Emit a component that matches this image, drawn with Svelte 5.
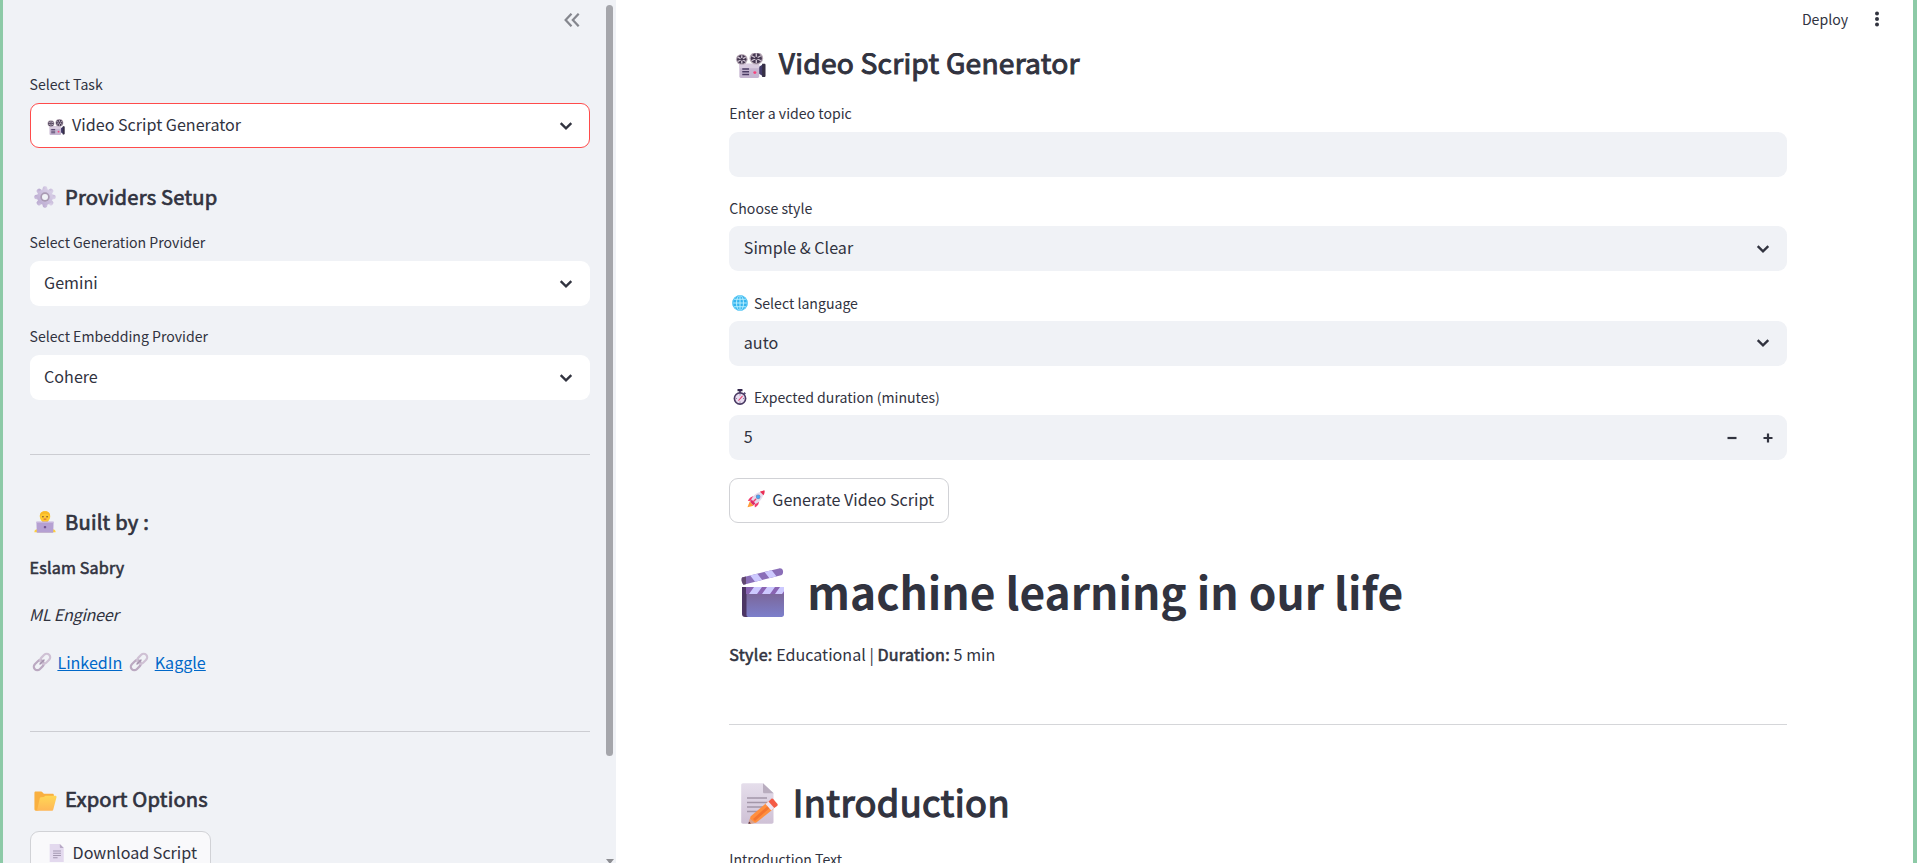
<script>
  let task = $state('Video Script Generator');
  let generation = $state('Gemini');
  let embedding = $state('Cohere');
  let style = $state('Simple & Clear');
  let language = $state('auto');
  let duration = $state(5);
</script>

{#snippet chevron()}
  <svg class="chevron" viewBox="0 0 14 10"><path d="M1.700 2.200 7 7.300l5.300-5.100" fill="none" stroke="#31333f" stroke-width="2.400" /></svg>
{/snippet}

{#snippet camera()}
  <svg class="emoji" viewBox="0 1 32 29" preserveAspectRatio="none">
    <path d="M23 18.5 30 14v15l-7-5z" fill="#433b6b" />
    <path d="M28 14.2h2.2c1 0 1.3.5 1.3 1.3v12c0 .8-.4 1.4-1.3 1.4H28z" fill="#362f45" />
    <rect x="4.5" y="14" width="20.5" height="16" rx="1.6" fill="#c5b5d0" />
    <rect x="4.5" y="14" width="20.5" height="5" rx="1.4" fill="#d9cce0" />
    <path d="M7.5 20h7M7.5 23h7M7.5 26h7" stroke="#4b3c64" stroke-width="1.6" />
    <circle cx="20.5" cy="24" r="1.6" fill="#f8427c" />
    <circle cx="7" cy="9.2" r="6" fill="#b6a7b4" />
    <circle cx="22" cy="8" r="7" fill="#b6a7b4" />
    <circle cx="7" cy="9.2" r="4.8" fill="#43364f" />
    <circle cx="22" cy="8" r="5.7" fill="#43364f" />
    <path d="M7 4.5v9.4M3 6.8l8 4.8M11 6.8l-8 4.8M22 2.5v11M17.2 5.2l9.6 5.6M26.8 5.2l-9.6 5.6" stroke="#cbbfce" stroke-width="1.5" />
    <circle cx="7" cy="9.2" r="1.5" fill="#43364f" />
    <circle cx="22" cy="8" r="1.7" fill="#43364f" />
  </svg>
{/snippet}

{#snippet gear()}
  <svg class="emoji" viewBox="0 0 32 32">
    <defs><linearGradient id="gearFill" x1="1" y1="0" x2="0" y2="1"><stop offset="0" stop-color="#ddd5ea" /><stop offset="1" stop-color="#b9a8cf" /></linearGradient></defs>
    <g fill="url(#gearFill)">
      {#each [0, 45, 90, 135] as turn}
        <rect x="12.6" y="0.5" width="6.8" height="31" rx="2.6" transform="rotate({turn} 16 16)" />
      {/each}
      <circle cx="16" cy="16" r="11.6" />
    </g>
    <circle cx="16" cy="16" r="6.8" fill="#a99ab3" />
    <circle cx="16" cy="16" r="4.4" fill="#f0f2f6" />
  </svg>
{/snippet}

{#snippet technologist()}
  <svg class="emoji" viewBox="0 0 32 32">
    <path d="M.5 31c0-3 1.500-4.500 4.500-4.500h22c3 0 4.500 1.500 4.500 4.500z" fill="#ffcf3d" />
    <path d="M12 12h8v5h-8z" fill="#f2a82c" />
    <rect x="8.500" y="0.300" width="15" height="15.400" rx="7" fill="#ffc931" />
    <path d="M8.500 8c0-5 3.200-7.700 7.500-7.700S23.500 3 23.500 8c-1.700-3-4-4-7.500-4S10.200 5 8.500 8z" fill="#f9b928" />
    <circle cx="13" cy="8.300" r="1.100" fill="#643c35" /><circle cx="19" cy="8.300" r="1.100" fill="#643c35" />
    <path d="M14 11.800h4" stroke="#d9473d" stroke-width="1.300" />
    <path d="M3.500 15.500h25L28 31.500H4z" fill="#b5a0d2" />
    <path d="M3.500 15.500h25v1.700h-25z" fill="#cbbce0" />
    <rect x="14.300" y="21.800" width="3.400" height="3.400" rx="1" fill="#715592" />
  </svg>
{/snippet}

{#snippet link()}
  <svg class="emoji" viewBox="0 0 32 32">
    <g transform="rotate(-45 16 16)" fill="none">
      <rect x="-2" y="9.800" width="20" height="12.400" rx="6.200" stroke="#bba9c1" stroke-width="3.900" />
      <rect x="14" y="9.800" width="20" height="12.400" rx="6.200" stroke="#cfc1d4" stroke-width="3.900" />
      <path d="M11 16h10" stroke="#a593ad" stroke-width="2.600" stroke-linecap="round" />
    </g>
  </svg>
{/snippet}

{#snippet folder()}
  <svg class="emoji" viewBox="0 0 32 28">
    <defs><linearGradient id="folderFill" x1="0" y1="0" x2="0" y2="1"><stop offset="0" stop-color="#ffd755" /><stop offset="1" stop-color="#ffb757" /></linearGradient></defs>
    <path d="M.5 2.500C.5 1.300 1.300.700 2.300.700h7.500c.8 0 1.300.300 1.900.900l2 2.100h12c1.200 0 2 .700 2 1.900V20L4 27.500H2.300C1.300 27.500.500 26.700.500 25.700z" fill="#f9b040" />
    <path d="M8 10.200c.3-1 .8-1.400 1.700-1.500l3.800-.4L16 6.500h13.700c1.300 0 2 .9 1.700 2.100l-4.500 17.200c-.3 1.100-1 1.700-2.100 1.700H3c1-.4 1.400-1 1.600-1.800z" fill="url(#folderFill)" />
  </svg>
{/snippet}

{#snippet page()}
  <svg class="emoji" viewBox="0 0 32 32">
    <path d="M3 0h18l7 7v25H3z" fill="#e3d9ee" />
    <path d="M21 0v5.500c0 1 .5 1.500 1.500 1.500H28z" fill="#b8a9c6" />
    <path d="M9 12.500h14M9 16.500h14M9 20.500h14M9 24.500h8" stroke="#a498b1" stroke-width="1.900" />
  </svg>
{/snippet}

{#snippet globe()}
  <svg class="emoji" viewBox="0 0 32 32">
    <circle cx="16" cy="16" r="15.500" fill="#35b4ee" />
    <g fill="none" stroke="#b9f0ff" stroke-width="1.900">
      <ellipse cx="16" cy="16" rx="7" ry="15" /><path d="M16 1v30M1 16h30M4 8.500h24M4 23.500h24" />
      <circle cx="16" cy="16" r="14.600" stroke="#69cff7" />
    </g>
  </svg>
{/snippet}

{#snippet stopwatch()}
  <svg class="emoji" viewBox="0 0 32 32">
    <rect x="11" y="0" width="10" height="4.500" rx="1.200" fill="#33264c" />
    <path d="M14 4h4v4h-4zM25 6l3 3-3 3-3-3z" fill="#5b4b75" />
    <circle cx="16" cy="19" r="12.800" fill="#493a63" />
    <circle cx="16" cy="19" r="9.600" fill="#e8dcf0" />
    <path d="M16 10.500v2.500M16 25v2.500M7.500 19H10M22 19h2.500" stroke="#766786" stroke-width="1.500" />
    <path d="m13.500 22.500 7-8" stroke="#e8335f" stroke-width="2.200" stroke-linecap="round" />
  </svg>
{/snippet}

{#snippet rocket()}
  <svg class="emoji" viewBox="0 0 32 32">
    <path d="M5 20 .8 30.800 12 28z" fill="#ff9c35" />
    <path d="M14 10.500C8 10 4 14 1.500 19.500l9-.5zM21.500 18c.5 6-2.500 10.500-7.500 13l-1-9z" fill="#f23b70" />
    <path d="M6 21.500C8 12 16 3.500 27 3l2.500 2.500C28.500 16 20 24.500 11 26.500z" fill="#e4dced" />
    <path d="M23 3c3-1.700 6.500-2.400 8.400-2.300C31.600 3 31 6.500 29.400 9.500z" fill="#e92f55" />
    <path d="m5.500 21 3-3.500 6.500 6.500-4 3z" fill="#dc2b68" />
    <circle cx="19.800" cy="12.200" r="4.100" fill="#8b83a8" /><circle cx="19.800" cy="12.200" r="3.200" fill="#47a8f2" />
    <path d="m11.500 20.500 4-4" stroke="#f23b70" stroke-width="2.400" stroke-linecap="round" />
  </svg>
{/snippet}

{#snippet clapper()}
  <svg class="emoji" viewBox="0 0 43 49">
    <defs>
      <linearGradient id="slate" x1="0" y1="0" x2="0" y2="1"><stop offset="0" stop-color="#7b608d" /><stop offset="1" stop-color="#7c7fcb" /></linearGradient>
      <clipPath id="armClip"><path d="M1 9.500 38 .4c2-.4 3.300.4 3.900 2.200.5 1.900 0 4-1.800 4.600L2.500 16.700C.500 14.500.200 11.500 1 9.500z" /></clipPath>
      <clipPath id="barClip"><path d="M5 19h38v7H5z" /></clipPath>
    </defs>
    <g clip-path="url(#armClip)">
      <path d="M0 0h43v18H0z" fill="#8a6eb8" />
      <path d="m8 6 7 9 7-2-7-9zM22 2l7 9 7-2-7-9z" fill="#cdc9ff" />
      <path d="M0 8h5v10H0z" fill="#614870" />
    </g>
    <path d="M1 19h6v30H4c-2 0-3-1-3-3z" fill="#4c3564" />
    <path d="M5.500 19H43v27.500c0 1.500-1 2.500-2.500 2.500h-33c-1.200 0-2-1-2-2z" fill="url(#slate)" />
    <g clip-path="url(#barClip)">
      <path d="M5 19h38v7H5z" fill="#8964b3" />
      <path d="m13 19-5 7h8l5-7zM26 19l-5 7h8l5-7zM39 19l-5 7h7l5-7z" fill="#cdc9ff" />
    </g>
  </svg>
{/snippet}

{#snippet memo()}
  <svg class="emoji" viewBox="0 0 37 41">
    <defs><linearGradient id="sheet" x1="0" y1="0" x2="0" y2="1"><stop offset="0" stop-color="#e5deeb" /><stop offset="1" stop-color="#cfc1d6" /></linearGradient></defs>
    <path d="M2 .3h20L32.500 10v29c0 1-.7 1.700-1.800 1.700H2C.8 40.700.2 40 .2 39V2C.2 1 .9.300 2 .300z" fill="url(#sheet)" />
    <path d="M22 .3v8.500c0 1 .5 1.500 1.500 1.500h9z" fill="#b9adbf" />
    <path d="M6 15h20M6 19.500h20M6 24h17M6 28.500h12" stroke="#a396a9" stroke-width="1.300" />
    <path d="M9.500 33.500 27 18.500l6 7L15 39.800 8 40.700z" fill="#ff8f3e" />
    <path d="m12 36 17-15 2 2-17 15z" fill="#f5752f" />
    <path d="m8.800 35.500-1.500 5.300 7-.9z" fill="#d9a18d" /><path d="m8 38.500-.7 2.300 2.600-.3z" fill="#4e3147" />
    <path d="m24.500 21 3-2.600 5.800 6.500-3 2.600z" fill="#eee3f2" />
    <path d="m27.500 18.400 2.700-2.400c.8-.6 1.500-.5 2.200.2l3.900 4.600c.6.800.5 1.500-.2 2.100l-2.800 2.200z" fill="#f45a45" />
  </svg>
{/snippet}

<div class="page">
  <aside class="sidebar">
    <div class="collapse">
      <svg viewBox="0 0 16 14"><path d="M7.500.700 1.600 7l5.900 6.300M14.700.700 8.800 7l5.900 6.300" fill="none" stroke="#85878e" stroke-width="2.200" /></svg>
    </div>

    <div class="label">Select Task</div>
    <div class="field light active"><span class="lead reel">{@render camera()}</span><span class="value">{task}</span>{@render chevron()}</div>

    <h3 class="setup"><span class="lead side">{@render gear()}</span>Providers Setup</h3>
    <div class="label">Select Generation Provider</div>
    <div class="field light"><span class="value">{generation}</span>{@render chevron()}</div>
    <div class="label next">Select Embedding Provider</div>
    <div class="field light"><span class="value">{embedding}</span>{@render chevron()}</div>

    <hr />

    <h3><span class="lead side">{@render technologist()}</span>Built by :</h3>
    <p class="name"><strong>Eslam Sabry</strong></p>
    <p class="role"><em>ML Engineer</em></p>
    <p class="links">
      <span class="lead chain">{@render link()}</span><a href="#linkedin">LinkedIn</a>
      <span class="lead chain second">{@render link()}</span><a href="#kaggle">Kaggle</a>
    </p>

    <hr class="late" />

    <h3><span class="lead side folder">{@render folder()}</span>Export Options</h3>
    <button class="download"><span class="lead small page-icon">{@render page()}</span>Download Script</button>

    <div class="thumb"></div>
    <div class="arrow"></div>
  </aside>

  <main>
    <header>
      <span class="deploy">Deploy</span>
      <svg class="dots" viewBox="0 0 6 16"><circle cx="3" cy="2.500" r="2" /><circle cx="3" cy="8" r="2" /><circle cx="3" cy="13.500" r="2" /></svg>
    </header>

    <div class="content">
      <h3 class="title"><span class="lead cam">{@render camera()}</span>Video Script Generator</h3>

      <div class="label">Enter a video topic</div>
      <div class="field"></div>

      <div class="label next">Choose style</div>
      <div class="field"><span class="value">{style}</span>{@render chevron()}</div>

      <div class="label next"><span class="lead tiny">{@render globe()}</span>Select language</div>
      <div class="field"><span class="value">{language}</span>{@render chevron()}</div>

      <div class="label next"><span class="lead tiny">{@render stopwatch()}</span>Expected duration (minutes)</div>
      <div class="field">
        <span class="value">{duration}</span>
        <div class="steps">
          <svg viewBox="0 0 10 10"><path d="M.5 5h9" stroke="#31333f" stroke-width="2.200" /></svg>
          <svg viewBox="0 0 10 10"><path d="M.5 5h9M5 .5v9" stroke="#31333f" stroke-width="2.200" /></svg>
        </div>
      </div>

      <button class="generate"><span class="lead small">{@render rocket()}</span>Generate Video Script</button>

      <h1><span class="lead big">{@render clapper()}</span>machine learning in our life</h1>
      <p class="meta"><strong>Style:</strong> Educational | <strong>Duration:</strong> 5 min</p>
      <hr />
      <h2><span class="lead mid">{@render memo()}</span>Introduction</h2>
      <div class="label">Introduction Text</div>
    </div>
  </main>
</div>

<style>
  :global(body) { overflow: hidden; background: #fff; }

  .page {
    display: flex;
    box-sizing: border-box;
    width: 1917px;
    height: 863px;
    overflow: hidden;
    border-left: 3px solid #8dcaa7;
    border-right: 4px solid #8dcaa7;
    background: #fff;
    color: #31333f;
    font: 400 16.1px/28px "Noto Sans CJK SC", "Noto Sans", sans-serif;
  }

  h1, h2, h3, p { margin: 0; display: flex; align-items: center; white-space: pre; }
  hr { width: 100%; height: 1px; margin: 0; border: 0; flex: none; background: #d5d6d9; }

  /* semi-bold drawn from the regular cut */
  h2, h3, strong { font-weight: 400; -webkit-text-stroke: 0.036em currentColor; letter-spacing: 0.011em; }
  .meta strong { letter-spacing: 0.018em; }

  .sidebar {
    position: relative;
    display: flex;
    flex-direction: column;
    flex: none;
    box-sizing: border-box;
    width: 613px;
    height: 863px;
    padding: 0 26px 0 26.600px;
    overflow: hidden;
    background: #f0f2f6;
  }
  .sidebar > * { flex: none; }

  .collapse { display: flex; justify-content: flex-end; height: 59px; padding: 13px 10px 0 0; }
  .collapse svg { width: 16px; height: 14px; }

  .label {
    display: flex;
    align-items: center;
    height: 24px;
    margin-bottom: 7px;
    font-size: 14.1px;
    line-height: 24px;
    white-space: pre;
  }
  .sidebar .label.next { margin-top: 18px; }
  .content .label.next { margin-top: 19.200px; margin-bottom: 6.300px; }

  .field {
    display: flex;
    align-items: center;
    box-sizing: border-box;
    height: 45px;
    padding: 0 17px 0 14.5px;
    border-radius: 9px;
    background: #f0f2f6;
  }
  .field.light { background: #fff; }
  .field.active { padding: 0 16px 0 16px; border: 1px solid #ff4b4b; }
  .value { flex: 1; height: 28px; margin-top: -3.200px; white-space: pre; }
  .chevron { width: 14px; height: 10px; }

  .emoji { display: block; width: 100%; height: 100%; overflow: visible; }
  .lead { flex: none; display: block; }
  .lead.small { width: 18px; height: 18px; margin-right: 7px; }
  .lead.page-icon { margin-top: 2px; }
  .lead.reel { width: 18px; height: 16px; margin: 2px 7.500px 0 0; }
  .lead.side { width: 22px; height: 22px; margin: 0 9.400px 0 4px; }
  .lead.side.folder { width: 23px; height: 20px; margin: 4px 8.400px 0 4px; }
  .lead.chain { width: 18px; height: 18px; margin: 0 6.800px 0 3px; }
  .lead.cam { width: 31px; height: 26px; margin: 7px 12.500px 0 6px; }
  .lead.tiny { width: 16px; height: 16px; margin: 0 6px 0 2.600px; }
  .lead.big { width: 43px; height: 49px; margin: 4px 23px 0 12px; }
  .lead.mid { width: 37px; height: 41px; margin: 4px 14.500px 0 12px; }

  .sidebar h3 { height: 28px; font-size: 20.150px; line-height: 28px; }
  .sidebar .setup { margin: 35px 0 19px; }
  .sidebar hr { margin: 54px 0 53px; background: #cccdd2; }
  .sidebar hr.late { margin-top: 55px; }
  .name { margin-top: 17px; }
  .role { margin-top: 19px; letter-spacing: -0.25px; }
  .role em { margin-left: -0.5px; }
  .links { margin-top: 20px; white-space: normal; }
  .lead.chain.second { margin-left: 7.500px; }
  a { color: #0068c9; text-decoration: underline; }

  button {
    display: flex;
    align-items: center;
    box-sizing: border-box;
    height: 45px;
    border: 1px solid #d1d2d6;
    border-radius: 9px;
    color: inherit;
    font: inherit;
    white-space: nowrap;
  }
  .download { align-self: flex-start; width: 181px; margin-top: 18px; padding: 0 0 3px 17px; background: #f9f9fb; }

  .thumb { position: absolute; top: 5px; left: 603px; width: 7px; height: 751px; border-radius: 4px; background: #a5a6ab; }
  .arrow { position: absolute; top: 859px; left: 602.500px; border: 4px solid transparent; border-top: 5px solid #8d8e93; }

  main { position: relative; flex: 1; height: 863px; overflow: hidden; }
  header {
    position: absolute;
    inset: 0 0 auto 0;
    z-index: 2;
    display: flex;
    justify-content: flex-end;
    align-items: flex-start;
    height: 53px;
    box-sizing: border-box;
    padding: 5px 33px 0 0;
    background: #fff;
  }
  .deploy { margin-right: 26px; font-size: 14.100px; }
  .dots { width: 6px; height: 16px; margin-top: 6px; fill: #31333f; }

  .content { display: flex; flex-direction: column; width: 1058px; margin-left: 113.300px; padding-top: 41.600px; }
  .content > * { flex: none; }
  .title { height: 40px; margin-bottom: 19.300px; font-size: 28.200px; line-height: 40px; letter-spacing: 0.008em; }
  .steps { display: flex; gap: 26px; margin-right: -2.300px; }
  .steps svg { width: 10px; height: 10px; }
  .generate { align-self: flex-start; width: 220px; margin-top: 18px; padding: 0 0 3px 17px; background: #fff; }
  h1 { height: 60px; margin-top: 37.300px; font-size: 44.300px; line-height: 60px; font-weight: 700; }
  .meta { display: block; margin-top: 19.300px; }
  .content hr { margin: 56px 0 51.200px; }
  h2 { height: 50px; margin-bottom: 21px; font-size: 36.260px; line-height: 50px; }
</style>
